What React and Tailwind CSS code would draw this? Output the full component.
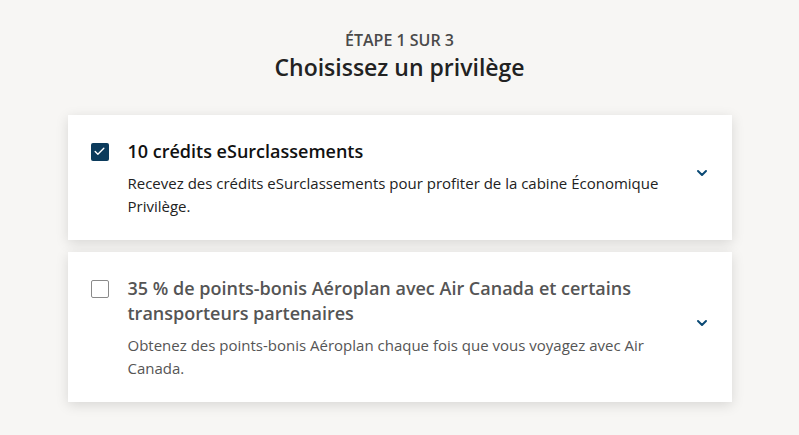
import { Check, ChevronDown } from 'lucide-react';

const options = [
  {
    title: '10 crédits eSurclassements',
    text: 'Recevez des crédits eSurclassements pour profiter de la cabine Économique Privilège.',
    checked: true,
  },
  {
    title: '35 % de points-bonis Aéroplan avec Air Canada et certains transporteurs partenaires',
    text: 'Obtenez des points-bonis Aéroplan chaque fois que vous voyagez avec Air Canada.',
    checked: false,
  },
];

export default function App() {
  return (
    <div className="min-h-[435px] w-full bg-[#f7f6f4] font-['Open_Sans',sans-serif] pt-[29px]">
      <div className="text-center text-[16px] font-semibold text-[#4a4a4a] leading-[22px]">ÉTAPE 1 SUR 3</div>
      <h1 className="text-center text-[23px] font-semibold text-[#222] leading-[30px] mt-[1px]">Choisissez un privilège</h1>

      <div className="mx-auto mt-[33px] w-[664px] flex flex-col gap-[12px]">
        {options.map((o, i) => (
          <div key={i} className="bg-white shadow-[0_3px_12px_rgba(0,0,0,0.13)] flex items-center pl-[23px] pr-[22px] pt-[24px] pb-[23px]">
            <div className="flex flex-1 gap-[19px] items-start">
              {o.checked ? (
                <div className="mt-[3.5px] w-[18px] h-[18px] rounded-[2px] bg-[#0b3b5c] flex items-center justify-center shrink-0">
                  <Check className="w-[13px] h-[13px] text-white" strokeWidth={2.5} />
                </div>
              ) : (
                <div className="mt-[3.5px] w-[18px] h-[18px] rounded-[2px] border-[1.5px] border-[#8a8a8a] bg-white shrink-0" />
              )}
              <div className="w-[535px]">
                <div className={`text-[18px] font-semibold leading-[25px] ${o.checked ? 'text-[#111]' : 'text-[#555]'}`}>{o.title}</div>
                <p className={`mt-[8px] text-[15px] leading-[22.5px] ${o.checked ? 'text-[#222]' : 'text-[#555]'}`}>{o.text}</p>
              </div>
            </div>
            <ChevronDown className="w-[16px] h-[16px] mb-[10px] text-[#0b4a75] shrink-0" strokeWidth={3} />
          </div>
        ))}
      </div>
    </div>
  );
}
